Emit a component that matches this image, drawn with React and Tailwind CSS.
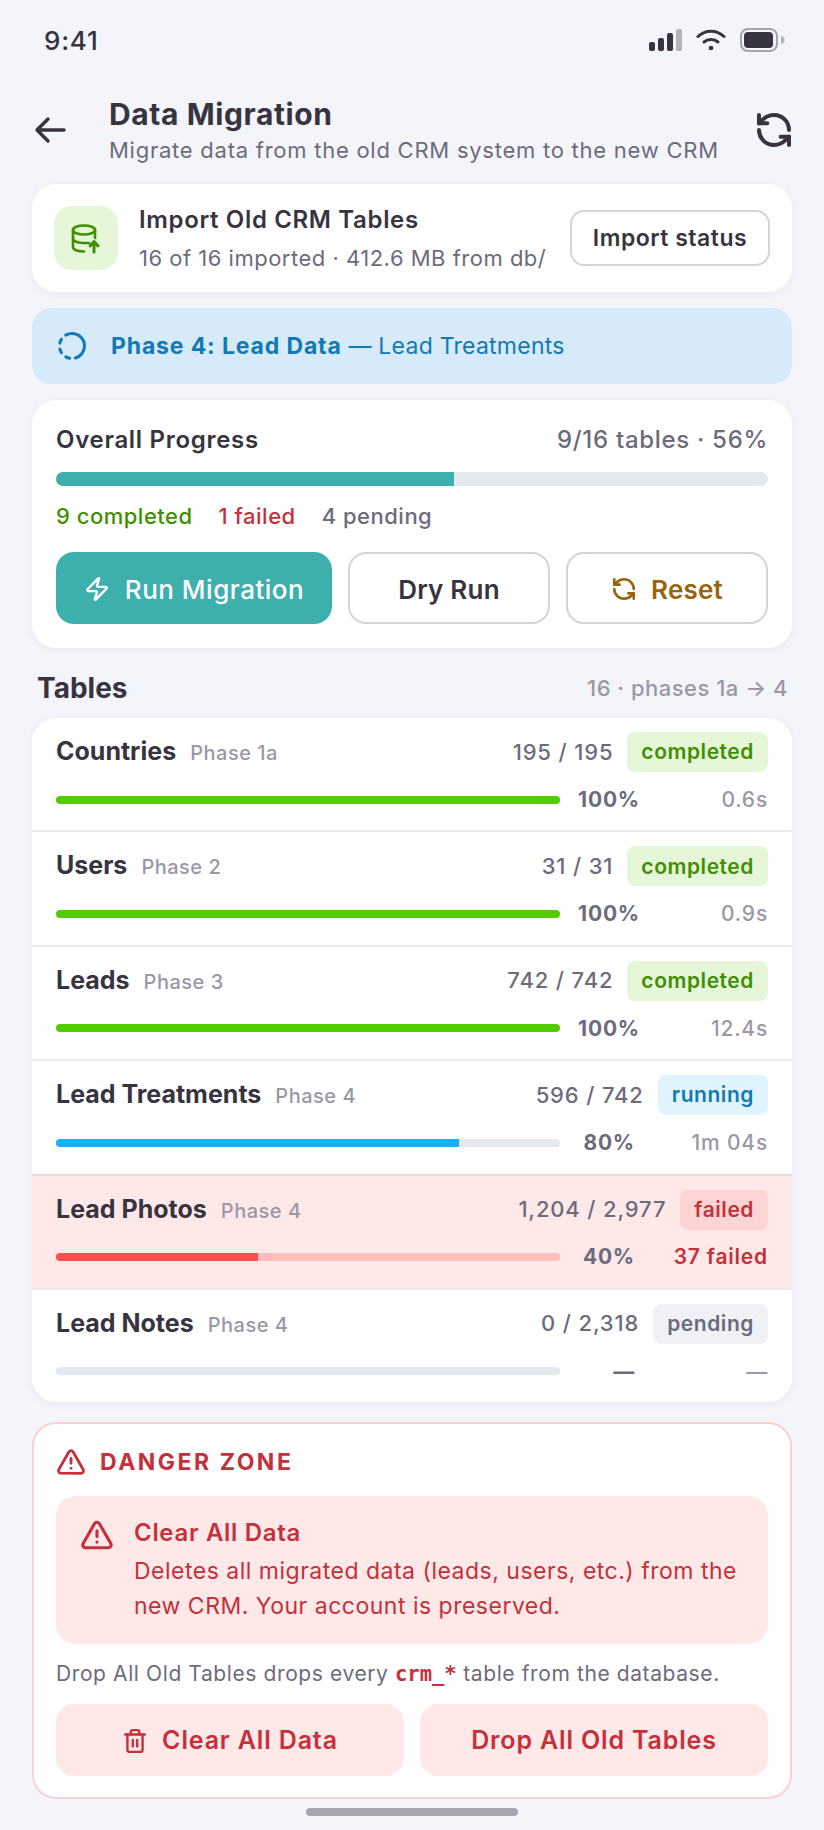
import React from 'react';
import { RefreshCcw, Zap, TriangleAlert, Trash2 } from 'lucide-react';

const rows = [
  { name: 'Countries', phase: 'Phase 1a', count: '195 / 195', status: 'completed', pct: 100, pctLabel: '100%', time: '0.6s' },
  { name: 'Users', phase: 'Phase 2', count: '31 / 31', status: 'completed', pct: 100, pctLabel: '100%', time: '0.9s' },
  { name: 'Leads', phase: 'Phase 3', count: '742 / 742', status: 'completed', pct: 100, pctLabel: '100%', time: '12.4s' },
  { name: 'Lead Treatments', phase: 'Phase 4', count: '596 / 742', status: 'running', pct: 80, pctLabel: '80%', time: '1m 04s' },
  { name: 'Lead Photos', phase: 'Phase 4', count: '1,204 / 2,977', status: 'failed', pct: 40, pctLabel: '40%', time: '37 failed' },
  { name: 'Lead Notes', phase: 'Phase 4', count: '0 / 2,318', status: 'pending', pct: 0, pctLabel: '—', time: '—' },
];

const pillStyles = {
  completed: 'bg-[#e6f7d9] text-[#3f8f00]',
  running: 'bg-[#e0f3ff] text-[#0f7ab5]',
  failed: 'bg-[#ffd4d4] text-[#c5303a]',
  pending: 'bg-[#f0f1f6] text-[#6d6b7b]',
};

const barStyles = {
  completed: 'bg-[#52cc00]',
  running: 'bg-[#15b0ff]',
  failed: 'bg-[#ff4d4f]',
  pending: 'bg-[#e6e8f0]',
};

const StatusBar = () => (
  <div className="h-[78px] pt-[2px] flex items-center justify-between pl-[44px] pr-[38px]">
    <span className="text-[26px] font-medium text-[#38343f] tracking-[0.8px]">9:41</span>
    <div className="flex items-center gap-[14px]">
      <svg width="34" height="24" viewBox="0 0 34 24">
        <rect x="1" y="14" width="6" height="9" rx="2" fill="#38343f" />
        <rect x="10" y="10" width="6" height="13" rx="2" fill="#38343f" />
        <rect x="19" y="5" width="6" height="18" rx="2" fill="#38343f" />
        <rect x="28" y="1" width="6" height="22" rx="2" fill="#b4b3ba" />
      </svg>
      <svg width="30" height="24" viewBox="0 0 30 24" fill="none" stroke="#38343f" strokeWidth="3" strokeLinecap="round">
        <path d="M2 8.500C9.500 1.500 20.500 1.500 28 8.500" />
        <path d="M8 14C12 10.500 18 10.500 22 14" />
        <circle cx="15" cy="20" r="1.600" fill="#38343f" stroke="#38343f" strokeWidth="1.500" />
      </svg>
      <svg width="46" height="24" viewBox="0 0 46 24">
        <rect x="1" y="1" width="36" height="22" rx="7" fill="none" stroke="#a6a5ad" strokeWidth="2" />
        <rect x="4" y="4" width="29" height="16" rx="4" fill="#38343f" />
        <path d="M41 8c2.500 0.500 3.500 2 3.500 4s-1 3.500-3.500 4z" fill="#b4b3ba" />
      </svg>
    </div>
  </div>
);

const TableRow = ({ row, last }) => {
  const isFailed = row.status === 'failed';
  return (
    <div className={`pt-[14px] px-[24px] ${last ? 'h-[112px]' : 'h-[114.4px] border-b-2'} ${isFailed ? 'bg-[#fee8e8] border-[#e8e8ee]' : row.name === 'Lead Treatments' ? 'border-[#e8d8da]' : 'border-[#e8e8ee]'}`}>
      <div className="h-[40px] flex items-center justify-between">
        <div className="flex items-baseline gap-[14px]">
          <span className="text-[25px] leading-[30px] font-bold text-[#38343f]">{row.name}</span>
          <span className="text-[20px] font-medium text-[#9a98a6] tracking-[0.5px]">{row.phase}</span>
        </div>
        <div className="flex items-center gap-[14px]">
          <span className="text-[22px] font-medium text-[#6d6b7b] tracking-[0.85px]">{row.count}</span>
          <span className={`h-[40px] px-[14px] rounded-[8px] flex items-center text-[21px] font-semibold tracking-[0.55px] ${pillStyles[row.status]}`}>{row.status}</span>
        </div>
      </div>
      <div className="mt-[11.5px] h-[32px] flex items-center">
        <div className={`w-[504px] h-[8px] rounded-full overflow-hidden ${isFailed ? 'bg-[#ffbdbd]' : 'bg-[#e6e8f0]'}`}>
          <div className={`h-full ${barStyles[row.status]}`} style={{ width: `${row.pct}%` }} />
        </div>
        <span className={`w-[80px] text-right text-[21px] font-bold text-[#6d6b7b] tracking-[0.8px] ${row.pct === 100 ? '' : 'pr-[5px]'}`}>{row.pctLabel}</span>
        <span className={`flex-1 text-right text-[21px] font-medium tracking-[0.8px] ${isFailed ? 'text-[#c5303a] font-semibold tracking-[0.5px]' : 'text-[#9a98a6]'}`}>{row.time}</span>
      </div>
    </div>
  );
};

const App = () => {
  return (
    <div className="w-[824px] h-[1830px] bg-[#f4f5fb] overflow-hidden font-['Inter',sans-serif] text-[#38343f]">
      <StatusBar />

      <div className="h-[106px] pt-[15px] pl-[32px] pr-[32px] flex items-start">
        <svg width="32" height="28" viewBox="0 0 32 28" fill="none" stroke="#38343f" strokeWidth="3.400" strokeLinecap="round" strokeLinejoin="round" className="mt-[23px] ml-[2px] shrink-0">
          <path d="M30 14H3M14 3L3 14l11 11" />
        </svg>
        <div className="ml-[43px] flex-1">
          <h1 className="text-[30px] leading-[42px] font-bold tracking-[0.6px]">Data Migration</h1>
          <p className="mt-[1px] text-[22px] leading-[28px] text-[#6d6b7b] tracking-[0.75px] whitespace-nowrap">Migrate data from the old CRM system to the new CRM</p>
        </div>
        <RefreshCcw size={40} strokeWidth={2.4} className="mt-[17px] -mr-[2px] text-[#38343f] shrink-0" />
      </div>

      <div className="px-[32px]">
        <div className="h-[108px] bg-white rounded-[24px] shadow-[0_2px_8px_rgba(40,40,80,0.06)] px-[22px] flex items-center">
          <div className="w-[64px] h-[64px] rounded-[18px] bg-[#e6f7d9] flex items-center justify-center">
            <svg width="32" height="32" viewBox="0 0 32 32" fill="none" stroke="#3f8f00" strokeWidth="2.600" strokeLinecap="round" strokeLinejoin="round">
              <ellipse cx="14" cy="8" rx="11" ry="4.500" />
              <path d="M3 8v17c0 2.500 4.500 4.500 11 4.500" />
              <path d="M25 8v8" />
              <path d="M3 16.500c0 2.500 4.500 4.500 11 4.500h5" />
              <path d="M24 30v-10M20 24l4-4.500 4 4.500" strokeWidth="3" />
            </svg>
          </div>
          <div className="ml-[21px] flex-1">
            <div className="mt-[1px] text-[24px] leading-[30px] font-semibold tracking-[0.65px]">Import Old CRM Tables</div>
            <div className="mt-[9px] text-[22px] leading-[28px] text-[#6d6b7b] tracking-[0.5px] whitespace-nowrap">16 of 16 imported · 412.6 MB from db/</div>
          </div>
          <button className="w-[200px] h-[56px] bg-white border-2 border-[#d4d4d8] rounded-[14px] text-[23px] font-semibold tracking-[0.5px]">Import status</button>
        </div>

        <div className="mt-[16px] h-[76px] bg-[#d6eafa] rounded-[20px] px-[25px] flex items-center">
          <svg width="30" height="30" viewBox="0 0 30 30" fill="none" stroke="#0f7ab5" strokeWidth="3" strokeLinecap="round">
            <circle cx="15" cy="15" r="12.500" strokeDasharray="16 6 4 6 4 6 4 6 26.500 0" />
          </svg>
          <div className="ml-[24px] text-[23px] tracking-[0.25px] text-[#0f7ab5]">
            <span className="font-bold tracking-[0.85px]">Phase 4: Lead Data</span> — Lead Treatments
          </div>
        </div>

        <div className="mt-[16px] h-[248px] bg-white rounded-[24px] shadow-[0_2px_8px_rgba(40,40,80,0.06)] px-[24px] pt-[24px]">
          <div className="flex items-center justify-between h-[30px] pt-[2px]">
            <span className="text-[24px] font-semibold tracking-[0.7px]">Overall Progress</span>
            <span className="text-[24px] font-medium text-[#6d6b7b] tracking-[0.7px]">9/16 tables · 56%</span>
          </div>
          <div className="mt-[18px] h-[14px] rounded-full bg-[#e6e8f0] overflow-hidden">
            <div className="h-full bg-[#3db0ae] w-[398px]" />
          </div>
          <div className="mt-[16px] h-[28px] flex items-center gap-[26px] text-[22px] font-medium tracking-[0.5px]">
            <span className="text-[#3f8f00]">9 completed</span>
            <span className="text-[#c5303a]">1 failed</span>
            <span className="text-[#6d6b7b]">4 pending</span>
          </div>
          <div className="mt-[22px] flex gap-[16px]">
            <button className="w-[276px] h-[72px] pt-[2px] rounded-[18px] bg-[#3db0ae] text-white text-[26px] font-medium tracking-[0.5px] flex items-center justify-center gap-[15px]">
              <Zap size={26} strokeWidth={2.2} />
              Run Migration
            </button>
            <button className="flex-1 h-[72px] pt-[2px] rounded-[18px] bg-white border-2 border-[#d4d4d8] text-[26px] font-semibold tracking-[0.2px]">Dry Run</button>
            <button className="flex-1 h-[72px] pt-[2px] rounded-[18px] bg-white border-2 border-[#d4d4d8] text-[26px] font-semibold tracking-[0.2px] text-[#96640a] flex items-center justify-center gap-[14px]">
              <RefreshCcw size={26} strokeWidth={2.4} />
              Reset
            </button>
          </div>
        </div>

        <div className="mt-[17px] mb-[7px] h-[46px] pl-[5px] pr-[4px] flex items-center justify-between">
          <span className="text-[28px] font-bold">Tables</span>
          <span className="text-[22px] font-medium text-[#9a98a6] tracking-[0.5px]">16 · phases 1a → 4</span>
        </div>

        <div className="bg-white rounded-[24px] shadow-[0_2px_8px_rgba(40,40,80,0.06)] overflow-hidden">
          {rows.map((row, i) => (
            <TableRow key={row.name} row={row} last={i === rows.length - 1} />
          ))}
        </div>

        <div className="mt-[20px] h-[377px] bg-white rounded-[24px] border-2 border-[#fdd0d2] px-[22px]">
          <div className="h-[72px] pt-[4px] flex items-center gap-[14px] text-[#c5303a]">
            <TriangleAlert size={30} strokeWidth={2.2} />
            <span className="text-[23px] font-bold tracking-[2.5px]">DANGER ZONE</span>
          </div>
          <div className="h-[148px] rounded-[20px] bg-[#fee8e8] pl-[24px] pr-[20px] pt-[22px] flex items-start text-[#c5303a]">
            <TriangleAlert size={34} strokeWidth={2.2} className="shrink-0" />
            <div className="ml-[20px]">
              <div className="text-[24px] leading-[30px] font-semibold tracking-[0.7px]">Clear All Data</div>
              <div className="mt-[6px] text-[23px] leading-[35px] tracking-[0.5px]">Deletes all migrated data (leads, users, etc.) from the new CRM. Your account is preserved.</div>
            </div>
          </div>
          <div className="h-[60px] flex items-center text-[21px] tracking-[0.6px] text-[#6d6b7b] whitespace-nowrap">
            <span>Drop All Old Tables drops every&nbsp;</span>
            <code className="font-['DejaVu_Sans_Mono',monospace] font-bold text-[20.500px] text-[#c5303a] tracking-[0px]">crm_*</code>
            <span>&nbsp;table from the database.</span>
          </div>
          <div className="flex gap-[16px]">
            <button className="flex-1 h-[72px] pt-[2px] rounded-[18px] bg-[#fee8e8] text-[#c5303a] text-[25px] font-semibold tracking-[0.85px] flex items-center justify-center gap-[14px]">
              <Trash2 size={26} strokeWidth={2.2} />
              Clear All Data
            </button>
            <button className="flex-1 h-[72px] pt-[2px] rounded-[18px] bg-[#fee8e8] text-[#c5303a] text-[25px] font-semibold tracking-[0.85px]">Drop All Old Tables</button>
          </div>
        </div>

        <div className="mt-[9px] mx-auto w-[212px] h-[8px] rounded-full bg-[#a6a6b0]" />
      </div>
    </div>
  );
};

export default App;
